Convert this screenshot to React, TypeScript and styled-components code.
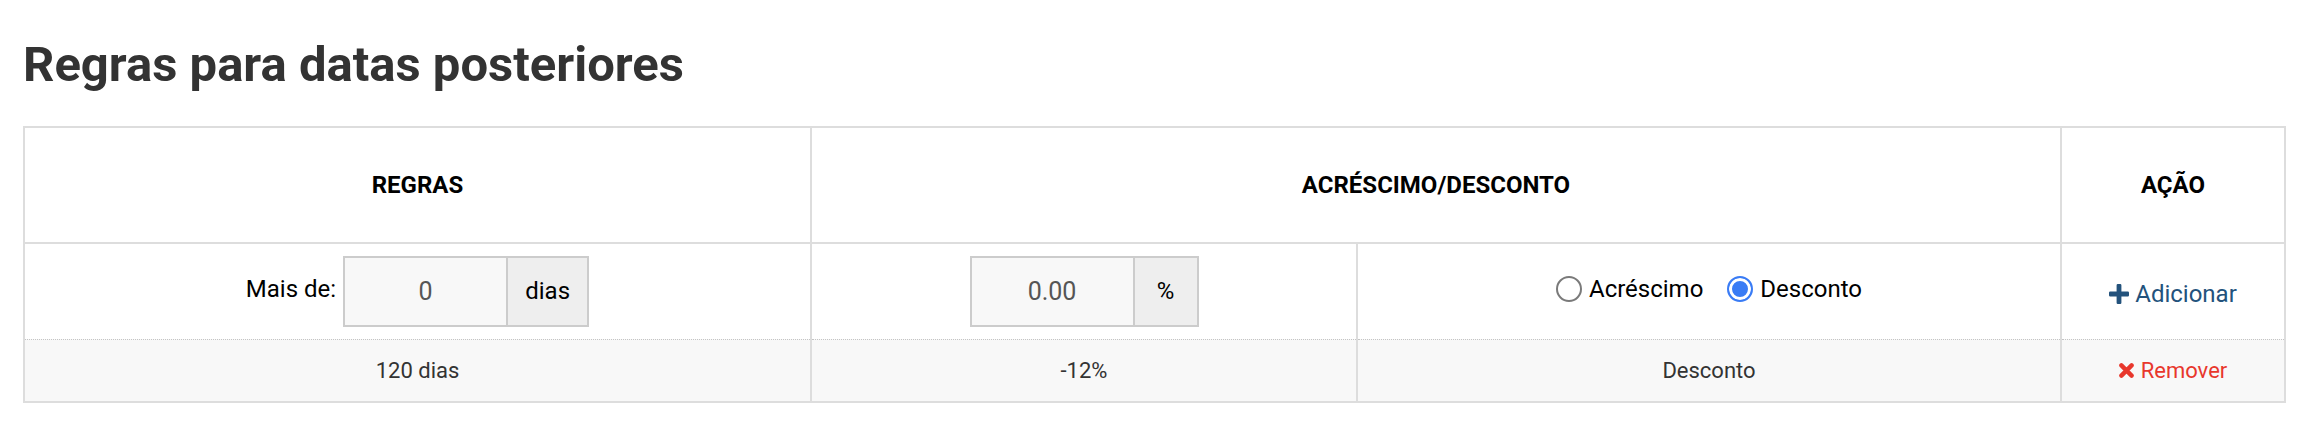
import React from "react";
import styled, { createGlobalStyle } from "styled-components";

const GlobalStyle = createGlobalStyle`
  html, body {
    margin: 0;
    padding: 0;
    background: #ffffff;
  }
  body {
    font-family: Roboto, "Liberation Sans", Arial, sans-serif;
    color: #333333;
  }
  * { box-sizing: border-box; }
`;

const Page = styled.div`
  padding: 37px 20px 0 23px;
`;

const Title = styled.h1`
  margin: 0 0 33px 0;
  font-family: Roboto, "Liberation Sans", Arial, sans-serif;
  font-size: 49px;
  line-height: 56px;
  font-weight: 700;
  color: #333333;
`;

const Table = styled.table`
  width: 100%;
  border-collapse: collapse;
  table-layout: fixed;
  border: 2px solid #dddddd;
  font-family: Roboto, "Liberation Sans", Arial, sans-serif;
`;

const Col = styled.col<{ $w?: number }>`
  width: ${(p) => (p.$w ? `${p.$w}px` : "auto")};
`;

const HeadCell = styled.th`
  height: 116px;
  padding: 0;
  border: 2px solid #dddddd;
  text-align: center;
  vertical-align: middle;
  font-size: 24px;
  font-weight: 700;
  color: #000000;
  text-transform: uppercase;
`;

const Cell = styled.td<{ $variant: "form" | "data" }>`
  height: ${(p) => (p.$variant === "form" ? "96px" : "63px")};
  padding: 0;
  border-left: 2px solid #dddddd;
  border-right: 2px solid #dddddd;
  border-top: ${(p) => (p.$variant === "data" ? "1px dotted #c4c4c4" : "none")};
  background: ${(p) => (p.$variant === "data" ? "#f8f8f8" : "#ffffff")};
  text-align: center;
  vertical-align: middle;
  font-size: ${(p) => (p.$variant === "form" ? "24px" : "22px")};
  color: ${(p) => (p.$variant === "form" ? "#000000" : "#333333")};
`;

const FieldRow = styled.div`
  display: inline-flex;
  align-items: center;
  gap: 7px;
`;

const FieldLabel = styled.span`
  font-size: 24px;
  color: #000000;
  margin-top: -5px;
`;

const InputGroup = styled.div`
  display: inline-flex;
  align-items: stretch;
  height: 71px;
  border: 2px solid #cccccc;
`;

const NumberInput = styled.input`
  width: 161px;
  height: 100%;
  border: none;
  outline: none;
  margin: 0;
  padding: 0;
  background: #f8f8f8;
  text-align: center;
  font-family: Roboto, "Liberation Sans", Arial, sans-serif;
  font-size: 25px;
  color: #555555;
`;

const Addon = styled.span<{ $w: number }>`
  display: flex;
  align-items: center;
  justify-content: center;
  width: ${(p) => p.$w}px;
  border-left: 2px solid #cccccc;
  background: #eeeeee;
  font-size: 24px;
  color: #000000;
`;

const RadioGroup = styled.div`
  display: inline-flex;
  align-items: center;
  gap: 24px;
`;

const RadioLabel = styled.label`
  display: inline-flex;
  align-items: center;
  gap: 7px;
  font-size: 24px;
  color: #000000;
  cursor: pointer;
`;

const Radio = styled.input`
  appearance: none;
  -webkit-appearance: none;
  margin: 0;
  width: 26px;
  height: 26px;
  border-radius: 50%;
  border: 2px solid #7a7a7a;
  background: #ffffff;
  &:checked {
    border-color: #3a7cf5;
    background: #3a7cf5;
    box-shadow: inset 0 0 0 3px #ffffff;
  }
`;

const ActionLink = styled.a<{ $tone: "add" | "remove" }>`
  display: inline-flex;
  align-items: center;
  gap: ${(p) => (p.$tone === "add" ? "6px" : "7px")};
  padding-top: ${(p) => (p.$tone === "add" ? "8px" : "0")};
  font-size: ${(p) => (p.$tone === "add" ? "24px" : "22px")};
  color: ${(p) => (p.$tone === "add" ? "#23527c" : "#e8372c")};
  text-decoration: none;
  cursor: pointer;
  svg {
    flex: none;
  }
`;

const PlusIcon = () => (
  <svg width="20" height="20" viewBox="0 0 20 20" aria-hidden="true">
    <path
      fill="currentColor"
      d="M7.6 1.2 Q7.6 0 8.8 0 H11.2 Q12.4 0 12.4 1.2 V7.6 H18.8 Q20 7.6 20 8.8 V11.2 Q20 12.4 18.8 12.4 H12.4 V18.8 Q12.4 20 11.2 20 H8.8 Q7.6 20 7.6 18.8 V12.4 H1.2 Q0 12.4 0 11.2 V8.8 Q0 7.6 1.2 7.6 H7.6 Z"
    />
  </svg>
);

const TimesIcon = () => (
  <svg width="15" height="15" viewBox="0 0 15 15" aria-hidden="true">
    <path
      stroke="currentColor"
      strokeWidth="4.4"
      strokeLinecap="round"
      d="M2.4 2.4 L12.6 12.6 M12.6 2.4 L2.4 12.6"
    />
  </svg>
);

export default function App() {
  return (
    <>
      <GlobalStyle />
      <Page>
        <Title>Regras para datas posteriores</Title>
        <Table>
          <colgroup>
            <Col $w={787} />
            <Col $w={546} />
            <Col $w={704} />
            <Col />
          </colgroup>
          <thead>
            <tr>
              <HeadCell>Regras</HeadCell>
              <HeadCell colSpan={2}>Acréscimo/Desconto</HeadCell>
              <HeadCell>Ação</HeadCell>
            </tr>
          </thead>
          <tbody>
            <tr>
              <Cell $variant="form">
                <FieldRow>
                  <FieldLabel>Mais de:</FieldLabel>
                  <InputGroup>
                    <NumberInput type="text" defaultValue="0" />
                    <Addon $w={81}>dias</Addon>
                  </InputGroup>
                </FieldRow>
              </Cell>
              <Cell $variant="form">
                <InputGroup>
                  <NumberInput type="text" defaultValue="0.00" />
                  <Addon $w={64}>%</Addon>
                </InputGroup>
              </Cell>
              <Cell $variant="form">
                <RadioGroup>
                  <RadioLabel>
                    <Radio type="radio" name="tipo" value="acrescimo" />
                    Acréscimo
                  </RadioLabel>
                  <RadioLabel>
                    <Radio type="radio" name="tipo" value="desconto" defaultChecked />
                    Desconto
                  </RadioLabel>
                </RadioGroup>
              </Cell>
              <Cell $variant="form">
                <ActionLink $tone="add">
                  <PlusIcon />
                  Adicionar
                </ActionLink>
              </Cell>
            </tr>
            <tr>
              <Cell $variant="data">120 dias</Cell>
              <Cell $variant="data">-12%</Cell>
              <Cell $variant="data">Desconto</Cell>
              <Cell $variant="data">
                <ActionLink $tone="remove">
                  <TimesIcon />
                  Remover
                </ActionLink>
              </Cell>
            </tr>
          </tbody>
        </Table>
      </Page>
    </>
  );
}
